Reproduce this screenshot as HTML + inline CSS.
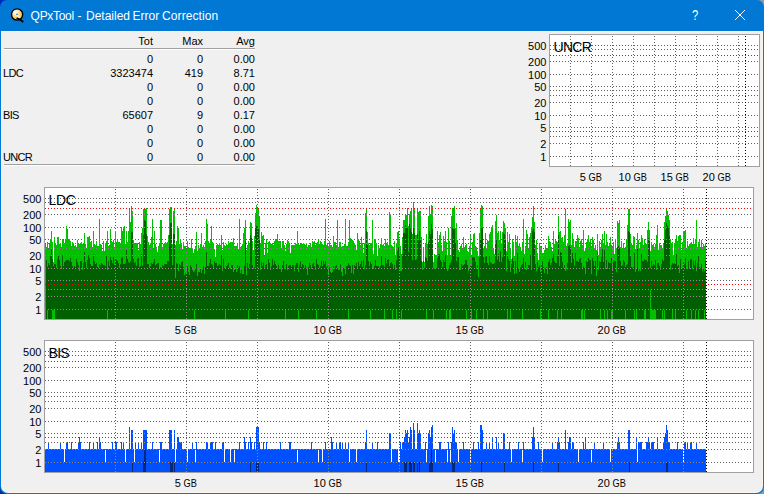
<!DOCTYPE html>
<html><head><meta charset="utf-8"><title>QPxTool - Detailed Error Correction</title>
<style>
html,body{margin:0;padding:0}
body{width:764px;height:494px;position:relative;overflow:hidden;background:#8b99a8;font-family:"Liberation Sans", sans-serif;}
.cn{position:absolute;width:10px;height:10px}
#win{position:absolute;left:0;top:0;width:764px;height:494px;background:#0078d4;border-radius:7px;overflow:hidden}
#edge{position:absolute;left:1px;top:31px;width:762px;height:462px;background:#fdf6ee;border-radius:0 0 7px 7px}
#body{position:absolute;left:2px;top:32px;width:760px;height:460px;background:#f0f0f0;border-radius:0 0 6px 6px}
#title{position:absolute;left:0;top:8px;font-size:12px;line-height:16px;color:#fff;white-space:nowrap}
#title span{position:absolute;top:0}
.tb{position:absolute;color:#fff}
.r{position:absolute;left:0;height:14px;width:260px;font-size:11px;line-height:14px;color:#000;white-space:nowrap}
.r span{position:absolute;top:0}
.c0{left:3px;letter-spacing:-0.7px}
.c1{right:107px}.c2{right:57px}.c3{right:5px}
.hl{position:absolute;left:4px;width:251px;height:1px}
</style></head><body>
<div class="cn" style="left:0;top:0;background:#0028be"></div>
<div class="cn" style="left:0;bottom:0;background:#002a96"></div>
<div id="win">
<svg width="30" height="30" viewBox="0 0 30 30" style="position:absolute;left:0;top:0">
<defs><radialGradient id="g" cx="0.36" cy="0.3" r="0.8"><stop offset="0" stop-color="#fff"/><stop offset="0.45" stop-color="#ffd98a"/><stop offset="1" stop-color="#ffb000"/></radialGradient></defs>
<circle cx="17.1" cy="14.5" r="5.6" fill="url(#g)" stroke="#000" stroke-width="1.4"/>
<path d="M13.5 11 L20 18" stroke="#fff" stroke-opacity=".55" stroke-width="2"/>
<circle cx="17" cy="14.4" r="0.8" fill="#2a7fd0"/>
<path d="M17.3 18.4 Q20 19 22.6 21.5" stroke="#000" stroke-width="1.9" fill="none" stroke-linecap="round"/>
</svg>
<div id="title"><span style="left:30.6px;letter-spacing:-0.3px">QPxTool</span> <span style="left:77.6px">-</span> <span style="left:86px">Detailed</span> <span style="left:132.6px">Error</span> <span style="left:162px;letter-spacing:0.1px">Correction</span></div>
<div class="tb" style="left:691px;top:6px;font-size:14px;line-height:18px;width:8px;text-align:center;transform:scaleX(.8);transform-origin:4.2px 0">?</div>
<svg width="12" height="12" viewBox="0 0 12 12" style="position:absolute;left:734px;top:9px"><path d="M1 1L11 11M11 1L1 11" stroke="#fff" stroke-width="1"/></svg>
<div id="edge"></div><div id="body"></div>
<div class="hl" style="top:48px;background:#a0a0a0"></div><div class="hl" style="top:49px;background:#fff"></div>
<div class="hl" style="top:164px;background:#a0a0a0"></div><div class="hl" style="top:165px;background:#fff"></div>
<div class="r" style="top:34px"><span class="c1">Tot</span> <span class="c2">Max</span> <span class="c3">Avg</span></div>
<div class="r" style="top:52px"><span class="c0"></span> <span class="c1">0</span><span class="c2">0</span> <span class="c3">0.00</span></div>
<div class="r" style="top:66px"><span class="c0">LDC</span> <span class="c1">3323474</span><span class="c2">419</span> <span class="c3">8.71</span></div>
<div class="r" style="top:80px"><span class="c0"></span> <span class="c1">0</span><span class="c2">0</span> <span class="c3">0.00</span></div>
<div class="r" style="top:94px"><span class="c0"></span> <span class="c1">0</span><span class="c2">0</span> <span class="c3">0.00</span></div>
<div class="r" style="top:108px"><span class="c0">BIS</span> <span class="c1">65607</span><span class="c2">9</span> <span class="c3">0.17</span></div>
<div class="r" style="top:122px"><span class="c0"></span> <span class="c1">0</span><span class="c2">0</span> <span class="c3">0.00</span></div>
<div class="r" style="top:136px"><span class="c0"></span> <span class="c1">0</span><span class="c2">0</span> <span class="c3">0.00</span></div>
<div class="r" style="top:150px"><span class="c0">UNCR</span> <span class="c1">0</span><span class="c2">0</span> <span class="c3">0.00</span></div>
<svg width="764" height="494" viewBox="0 0 764 494" style="position:absolute;left:0;top:0"><rect x="549" y="34" width="211" height="133" fill="#fff"/><rect x="44" y="187" width="710" height="133" fill="#fff"/><rect x="44" y="340" width="710" height="133" fill="#fff"/><g shape-rendering="crispEdges"><path id="pl" fill="#00c000" d="M45 244H46V319H45ZM46 247H47V319H46ZM47 242H48V319H47ZM48 249H49V319H48ZM49 243H50V319H49ZM50 239H51V319H50ZM51 231H52V319H51ZM52 242H53V319H52ZM53 262H54V319H53ZM54 237H55V319H54ZM55 243H56V319H55ZM56 245H57V319H56ZM57 237H59V319H57ZM59 244H60V319H59ZM60 243H61V319H60ZM61 247H62V319H61ZM62 239H63V319H62ZM63 240H64V319H63ZM64 243H65V319H64ZM65 239H66V319H65ZM66 226H67V319H66ZM67 229H68V319H67ZM68 239H70V319H68ZM70 241H71V319H70ZM71 246H72V319H71ZM72 242H73V319H72ZM73 243H74V319H73ZM74 246H75V319H74ZM75 245H76V319H75ZM76 247H77V319H76ZM77 240H78V319H77ZM78 244H80V319H78ZM80 243H81V319H80ZM81 242H82V319H81ZM82 244H83V319H82ZM83 243H84V319H83ZM84 233H85V319H84ZM85 244H86V319H85ZM86 248H87V319H86ZM87 237H89V319H87ZM89 236H90V319H89ZM90 242H91V319H90ZM91 241H92V319H91ZM92 247H93V319H92ZM93 231H94V319H93ZM94 244H95V319H94ZM95 245H96V319H95ZM96 241H97V319H96ZM97 246H99V319H97ZM99 219H100V319H99ZM100 244H101V319H100ZM101 245H102V319H101ZM102 251H103V319H102ZM103 241H104V319H103ZM104 251H105V319H104ZM105 243H106V319H105ZM106 241H107V319H106ZM107 231H108V319H107ZM108 246H109V319H108ZM109 245H110V319H109ZM110 229H111V319H110ZM111 241H112V319H111ZM112 242H113V319H112ZM113 240H114V319H113ZM114 247H115V319H114ZM115 231H116V319H115ZM116 242H117V319H116ZM117 240H118V319H117ZM118 242H120V319H118ZM120 243H121V319H120ZM121 227H122V319H121ZM122 231H123V319H122ZM123 227H124V319H123ZM124 226H125V319H124ZM125 244H126V319H125ZM126 231H127V319H126ZM127 242H128V319H127ZM128 231H129V319H128ZM129 208H130V319H129ZM130 222H131V319H130ZM131 206H132V319H131ZM132 211H133V319H132ZM133 240H134V319H133ZM134 243H135V319H134ZM135 244H136V319H135ZM136 243H138V319H136ZM138 250H139V319H138ZM139 242H140V319H139ZM140 244H141V319H140ZM141 233H142V319H141ZM142 228H143V319H142ZM143 209H146V319H143ZM146 208H147V319H146ZM147 236H148V319H147ZM148 242H149V319H148ZM149 245H150V319H149ZM150 243H151V319H150ZM151 237H152V319H151ZM152 219H153V319H152ZM153 249H154V319H153ZM154 231H155V319H154ZM155 244H156V319H155ZM156 247H157V319H156ZM157 252H158V319H157ZM158 246H159V319H158ZM159 243H160V319H159ZM160 220H162V319H160ZM162 247H163V319H162ZM163 244H164V319H163ZM164 243H165V319H164ZM165 242H166V319H165ZM166 243H167V319H166ZM167 242H168V319H167ZM168 235H169V319H168ZM169 209H170V319H169ZM170 207H172V319H170ZM172 244H173V319H172ZM173 211H174V319H173ZM174 208H175V319H174ZM175 245H176V319H175ZM176 241H177V319H176ZM177 226H178V319H177ZM178 228H179V319H178ZM179 244H180V319H179ZM180 239H181V319H180ZM181 243H182V319H181ZM182 249H183V319H182ZM183 242H184V319H183ZM184 246H186V319H184ZM186 250H187V319H186ZM187 241H188V319H187ZM188 247H189V319H188ZM189 249H190V319H189ZM190 248H191V319H190ZM191 239H192V319H191ZM192 248H193V319H192ZM193 253H194V319H193ZM194 249H195V319H194ZM195 246H196V319H195ZM196 232H197V319H196ZM197 251H198V319H197ZM198 245H199V319H198ZM199 248H200V319H199ZM200 244H201V319H200ZM201 233H202V319H201ZM202 247H203V319H202ZM203 245H204V319H203ZM204 247H205V319H204ZM205 241H206V319H205ZM206 219H207V319H206ZM207 224H208V319H207ZM208 241H209V319H208ZM209 243H210V319H209ZM210 240H211V319H210ZM211 226H212V319H211ZM212 242H213V319H212ZM213 243H214V319H213ZM214 249H215V319H214ZM215 257H216V319H215ZM216 245H217V319H216ZM217 244H218V319H217ZM218 245H219V319H218ZM219 243H220V319H219ZM220 245H221V319H220ZM221 235H222V319H221ZM222 250H223V319H222ZM223 242H224V319H223ZM224 245H225V319H224ZM225 246H226V319H225ZM226 244H227V319H226ZM227 245H228V319H227ZM228 241H229V319H228ZM229 243H230V319H229ZM230 242H233V319H230ZM233 238H234V319H233ZM234 246H237V319H234ZM237 244H238V319H237ZM238 249H239V319H238ZM239 219H240V319H239ZM240 247H241V319H240ZM241 246H242V319H241ZM242 244H243V319H242ZM243 233H244V319H243ZM244 228H245V319H244ZM245 220H246V319H245ZM246 250H247V319H246ZM247 245H248V319H247ZM248 241H249V319H248ZM249 244H250V319H249ZM250 222H251V319H250ZM251 223H252V319H251ZM252 241H253V319H252ZM253 250H254V319H253ZM254 236H255V319H254ZM255 213H256V319H255ZM256 205H257V319H256ZM257 208H258V319H257ZM258 209H259V319H258ZM259 216H260V319H259ZM260 243H261V319H260ZM261 232H262V319H261ZM262 236H263V319H262ZM263 235H264V319H263ZM264 256H265V319H264ZM265 243H266V319H265ZM266 239H267V319H266ZM267 253H268V319H267ZM268 242H269V319H268ZM269 241H270V319H269ZM270 243H271V319H270ZM271 244H272V319H271ZM272 243H273V319H272ZM273 245H274V319H273ZM274 241H275V319H274ZM275 239H276V319H275ZM276 240H277V319H276ZM277 234H278V319H277ZM278 241H281V319H278ZM281 248H282V319H281ZM282 241H284V319H282ZM284 245H285V319H284ZM285 251H286V319H285ZM286 244H287V319H286ZM287 240H288V319H287ZM288 241H289V319H288ZM289 243H290V319H289ZM290 253H291V319H290ZM291 245H295V319H291ZM295 243H296V319H295ZM296 244H297V319H296ZM297 231H298V319H297ZM298 243H299V319H298ZM299 245H300V319H299ZM300 244H301V319H300ZM301 243H302V319H301ZM302 244H303V319H302ZM303 243H304V319H303ZM304 244H305V319H304ZM305 245H306V319H305ZM306 243H307V319H306ZM307 247H308V319H307ZM308 245H310V319H308ZM310 243H311V319H310ZM311 247H312V319H311ZM312 241H313V319H312ZM313 242H314V319H313ZM314 241H315V319H314ZM315 245H316V319H315ZM316 243H317V319H316ZM317 242H318V319H317ZM318 240H319V319H318ZM319 244H320V319H319ZM320 241H321V319H320ZM321 242H322V319H321ZM322 244H323V319H322ZM323 245H324V319H323ZM324 241H325V319H324ZM325 219H326V319H325ZM326 245H327V319H326ZM327 244H328V319H327ZM328 246H329V319H328ZM329 241H330V319H329ZM330 245H332V319H330ZM332 247H333V319H332ZM333 236H334V319H333ZM334 242H336V319H334ZM336 245H337V319H336ZM337 220H338V319H337ZM338 247H339V319H338ZM339 242H341V319H339ZM341 247H342V319H341ZM342 246H344V319H342ZM344 244H345V319H344ZM345 219H346V319H345ZM346 246H348V319H346ZM348 242H349V319H348ZM349 220H350V319H349ZM350 238H351V319H350ZM351 240H353V319H351ZM353 241H354V319H353ZM354 243H355V319H354ZM355 245H356V319H355ZM356 250H357V319H356ZM357 233H358V319H357ZM358 239H359V319H358ZM359 241H360V319H359ZM360 245H361V319H360ZM361 237H362V319H361ZM362 243H363V319H362ZM363 253H364V319H363ZM364 243H365V319H364ZM365 213H366V319H365ZM366 209H367V319H366ZM367 232H368V319H367ZM368 243H369V319H368ZM369 245H370V319H369ZM370 243H372V319H370ZM372 220H373V319H372ZM373 254H374V319H373ZM374 239H376V319H374ZM376 243H377V319H376ZM377 256H378V319H377ZM378 245H379V319H378ZM379 248H380V319H379ZM380 244H381V319H380ZM381 238H382V319H381ZM382 245H383V319H382ZM383 244H384V319H383ZM384 246H385V319H384ZM385 239H386V319H385ZM386 243H387V319H386ZM387 242H388V319H387ZM388 245H389V319H388ZM389 212H390V319H389ZM390 214H391V319H390ZM391 245H392V319H391ZM392 246H393V319H392ZM393 247H394V319H393ZM394 241H395V319H394ZM395 255H396V319H395ZM396 243H397V319H396ZM397 232H398V319H397ZM398 231H399V319H398ZM399 240H400V319H399ZM400 246H401V319H400ZM401 254H402V319H401ZM402 237H403V319H402ZM403 220H405V319H403ZM405 215H407V319H405ZM407 208H408V319H407ZM408 226H409V319H408ZM409 214H410V319H409ZM410 211H411V319H410ZM411 208H412V319H411ZM412 234H413V319H412ZM413 202H414V319H413ZM414 208H415V319H414ZM415 235H417V319H415ZM417 208H418V319H417ZM418 212H419V319H418ZM419 211H421V319H419ZM421 237H422V319H421ZM422 262H423V319H422ZM423 247H424V319H423ZM424 262H425V319H424ZM425 243H426V319H425ZM426 234H427V319H426ZM427 244H428V319H427ZM428 216H429V319H428ZM429 206H430V319H429ZM430 214H431V319H430ZM431 205H432V319H431ZM432 206H433V319H432ZM433 262H434V319H433ZM434 254H435V319H434ZM435 255H437V319H435ZM437 231H438V319H437ZM438 242H439V319H438ZM439 235H440V319H439ZM440 232H441V319H440ZM441 245H442V319H441ZM442 251H443V319H442ZM443 236H444V319H443ZM444 241H445V319H444ZM445 231H446V319H445ZM446 242H447V319H446ZM447 255H448V319H447ZM448 228H449V319H448ZM449 241H450V319H449ZM450 256H451V319H450ZM451 216H452V319H451ZM452 208H453V319H452ZM453 209H454V319H453ZM454 206H455V319H454ZM455 228H456V319H455ZM456 223H457V319H456ZM457 240H458V319H457ZM458 250H459V319H458ZM459 252H460V319H459ZM460 246H461V319H460ZM461 244H462V319H461ZM462 249H463V319H462ZM463 237H464V319H463ZM464 247H465V319H464ZM465 245H466V319H465ZM466 244H467V319H466ZM467 251H468V319H467ZM468 252H469V319H468ZM469 246H470V319H469ZM470 235H471V319H470ZM471 256H472V319H471ZM472 242H473V319H472ZM473 234H474V319H473ZM474 233H475V319H474ZM475 246H476V319H475ZM476 247H477V319H476ZM477 251H478V319H477ZM478 256H479V319H478ZM479 233H480V319H479ZM480 208H481V319H480ZM481 205H482V319H481ZM482 206H483V319H482ZM483 248H484V319H483ZM484 246H485V319H484ZM485 233H486V319H485ZM486 248H487V319H486ZM487 240H488V319H487ZM488 241H489V319H488ZM489 234H490V319H489ZM490 232H491V319H490ZM491 227H492V319H491ZM492 225H493V319H492ZM493 248H494V319H493ZM494 254H495V319H494ZM495 221H496V319H495ZM496 215H497V319H496ZM497 233H498V319H497ZM498 231H499V319H498ZM499 240H500V319H499ZM500 231H501V319H500ZM501 243H502V319H501ZM502 232H503V319H502ZM503 221H504V319H503ZM504 223H505V319H504ZM505 228H506V319H505ZM506 251H507V319H506ZM507 232H508V319H507ZM508 242H509V319H508ZM509 234H510V319H509ZM510 249H511V319H510ZM511 259H512V319H511ZM512 239H513V319H512ZM513 242H514V319H513ZM514 256H515V319H514ZM515 235H516V319H515ZM516 242H517V319H516ZM517 236H518V319H517ZM518 246H519V319H518ZM519 243H520V319H519ZM520 247H521V319H520ZM521 251H522V319H521ZM522 242H523V319H522ZM523 219H524V319H523ZM524 254H525V319H524ZM525 246H526V319H525ZM526 230H527V319H526ZM527 234H528V319H527ZM528 249H529V319H528ZM529 237H530V319H529ZM530 233H531V319H530ZM531 227H532V319H531ZM532 217H533V319H532ZM533 206H534V319H533ZM534 222H535V319H534ZM535 245H536V319H535ZM536 240H537V319H536ZM537 253H538V319H537ZM538 260H539V319H538ZM539 243H540V319H539ZM540 246H541V319H540ZM541 247H542V319H541ZM542 253H544V319H542ZM544 250H545V319H544ZM545 245H546V319H545ZM546 249H547V319H546ZM547 248H548V319H547ZM548 236H549V319H548ZM549 241H550V319H549ZM550 242H551V319H550ZM551 247H552V319H551ZM552 251H553V319H552ZM553 231H554V319H553ZM554 244H555V319H554ZM555 240H556V319H555ZM556 241H557V319H556ZM557 242H558V319H557ZM558 216H559V319H558ZM559 232H560V319H559ZM560 231H561V319H560ZM561 238H562V319H561ZM562 237H563V319H562ZM563 242H564V319H563ZM564 235H565V319H564ZM565 209H566V319H565ZM566 246H567V319H566ZM567 243H568V319H567ZM568 219H569V319H568ZM569 222H570V319H569ZM570 220H571V319H570ZM571 245H572V319H571ZM572 233H573V319H572ZM573 240H574V319H573ZM574 247H575V319H574ZM575 241H577V319H575ZM577 235H578V319H577ZM578 238H579V319H578ZM579 247H580V319H579ZM580 241H581V319H580ZM581 239H582V319H581ZM582 245H583V319H582ZM583 230H584V319H583ZM584 251H585V319H584ZM585 248H586V319H585ZM586 242H587V319H586ZM587 239H588V319H587ZM588 235H589V319H588ZM589 242H590V319H589ZM590 239H591V319H590ZM591 246H592V319H591ZM592 237H593V319H592ZM593 240H594V319H593ZM594 248H595V319H594ZM595 245H596V319H595ZM596 250H597V319H596ZM597 234H598V319H597ZM598 255H599V319H598ZM599 241H600V319H599ZM600 247H601V319H600ZM601 240H602V319H601ZM602 234H603V319H602ZM603 243H604V319H603ZM604 231H605V319H604ZM605 245H606V319H605ZM606 234H607V319H606ZM607 242H608V319H607ZM608 246H609V319H608ZM609 244H610V319H609ZM610 237H611V319H610ZM611 245H612V319H611ZM612 247H613V319H612ZM613 242H614V319H613ZM614 254H615V319H614ZM615 239H616V319H615ZM616 248H617V319H616ZM617 221H618V319H617ZM618 223H619V319H618ZM619 220H620V319H619ZM620 247H621V319H620ZM621 241H622V319H621ZM622 248H623V319H622ZM623 243H624V319H623ZM624 249H625V319H624ZM625 247H626V319H625ZM626 239H627V319H626ZM627 225H628V319H627ZM628 209H630V319H628ZM630 234H631V319H630ZM631 243H632V319H631ZM632 245H633V319H632ZM633 236H634V319H633ZM634 237H635V319H634ZM635 249H636V319H635ZM636 245H637V319H636ZM637 233H638V319H637ZM638 240H639V319H638ZM639 248H640V319H639ZM640 242H641V319H640ZM641 235H642V319H641ZM642 238H643V319H642ZM643 245H644V319H643ZM644 239H645V319H644ZM645 244H647V319H645ZM647 230H648V319H647ZM648 222H649V319H648ZM649 230H650V319H649ZM650 251H651V319H650ZM651 242H652V319H651ZM652 245H653V319H652ZM653 244H654V319H653ZM654 247H655V319H654ZM655 244H656V319H655ZM656 235H657V319H656ZM657 225H658V319H657ZM658 250H659V319H658ZM659 243H660V319H659ZM660 245H662V319H660ZM662 248H663V319H662ZM663 244H664V319H663ZM664 222H665V319H664ZM665 216H666V319H665ZM666 209H667V319H666ZM667 211H668V319H667ZM668 215H669V319H668ZM669 220H670V319H669ZM670 239H671V319H670ZM671 243H672V319H671ZM672 242H673V319H672ZM673 255H674V319H673ZM674 243H675V319H674ZM675 240H676V319H675ZM676 235H677V319H676ZM677 241H678V319H677ZM678 236H679V319H678ZM679 235H681V319H679ZM681 250H682V319H681ZM682 242H683V319H682ZM683 231H685V319H683ZM685 230H686V319H685ZM686 248H687V319H686ZM687 241H688V319H687ZM688 246H689V319H688ZM689 244H690V319H689ZM690 243H691V319H690ZM691 242H692V319H691ZM692 244H693V319H692ZM693 238H694V319H693ZM694 244H695V319H694ZM695 239H696V319H695ZM696 220H697V319H696ZM697 247H698V319H697ZM698 242H699V319H698ZM699 240H700V319H699ZM700 247H701V319H700ZM701 240H702V319H701ZM702 247H703V319H702ZM703 244H704V319H703ZM704 246H705V319H704ZM705 243H706V319H705Z"/><path id="pd" fill="#006000" d="M46 260H47V319H46ZM47 267H48V319H47ZM48 263H49V319H48ZM49 265H50V319H49ZM50 256H51V319H50ZM51 248H52V319H51ZM52 259H53V319H52ZM53 266H54V319H53ZM54 264H56V319H54ZM56 268H57V319H56ZM57 259H58V319H57ZM58 256H59V319H58ZM59 260H60V319H59ZM60 266H61V319H60ZM61 269H62V319H61ZM62 255H63V319H62ZM63 266H64V319H63ZM64 262H65V319H64ZM65 261H66V319H65ZM66 260H69V319H66ZM69 261H70V319H69ZM70 258H71V319H70ZM71 262H72V319H71ZM72 266H73V319H72ZM73 268H74V319H73ZM74 266H75V319H74ZM75 267H76V319H75ZM76 259H77V319H76ZM77 262H78V319H77ZM78 265H79V319H78ZM79 271H80V319H79ZM80 261H82V319H80ZM82 270H83V319H82ZM83 263H84V319H83ZM84 252H85V319H84ZM85 262H86V319H85ZM86 268H87V319H86ZM87 260H88V319H87ZM88 255H89V319H88ZM89 258H90V319H89ZM90 264H91V319H90ZM91 266H93V319H91ZM93 254H94V319H93ZM94 261H95V319H94ZM95 264H96V319H95ZM96 263H97V319H96ZM97 267H98V319H97ZM98 268H99V319H98ZM99 264H100V319H99ZM100 265H101V319H100ZM101 263H102V319H101ZM102 264H103V319H102ZM103 265H105V319H103ZM105 266H106V319H105ZM106 256H107V319H106ZM107 270H108V319H107ZM108 261H109V319H108ZM109 266H110V319H109ZM110 257H111V319H110ZM111 260H112V319H111ZM112 263H113V319H112ZM113 257H114V319H113ZM114 265H115V319H114ZM115 259H116V319H115ZM116 260H117V319H116ZM117 261H118V319H117ZM118 263H119V319H118ZM119 268H120V319H119ZM120 264H121V319H120ZM121 258H122V319H121ZM122 257H123V319H122ZM123 264H125V319H123ZM125 263H126V319H125ZM126 250H127V319H126ZM127 259H128V319H127ZM128 262H129V319H128ZM129 263H130V319H129ZM130 261H131V319H130ZM131 232H133V319H131ZM133 259H134V319H133ZM134 263H135V319H134ZM135 262H136V319H135ZM136 266H137V319H136ZM137 259H138V319H137ZM138 258H139V319H138ZM139 267H140V319H139ZM140 266H141V319H140ZM141 254H142V319H141ZM142 266H143V319H142ZM143 235H144V319H143ZM144 220H145V319H144ZM145 221H146V319H145ZM146 234H147V319H146ZM147 264H149V319H147ZM149 268H150V319H149ZM150 266H151V319H150ZM151 263H152V319H151ZM152 264H153V319H152ZM153 262H154V319H153ZM154 259H155V319H154ZM155 265H156V319H155ZM156 264H157V319H156ZM157 263H159V319H157ZM159 268H160V319H159ZM160 267H161V319H160ZM161 268H162V319H161ZM162 265H163V319H162ZM163 266H164V319H163ZM164 264H167V319H164ZM167 261H169V319H167ZM169 235H170V319H169ZM170 223H172V319H170ZM172 265H173V319H172ZM173 234H175V319H173ZM175 278H176V319H175ZM176 263H177V319H176ZM177 264H178V319H177ZM178 271H179V319H178ZM179 264H180V319H179ZM180 265H181V319H180ZM181 262H182V319H181ZM182 261H183V319H182ZM183 267H184V319H183ZM184 275H185V319H184ZM185 273H187V319H185ZM187 266H188V319H187ZM188 272H189V319H188ZM189 275H190V319H189ZM190 265H191V319H190ZM191 267H192V319H191ZM192 270H193V319H192ZM193 272H194V319H193ZM194 271H195V319H194ZM195 269H196V319H195ZM196 264H197V319H196ZM197 276H198V319H197ZM198 272H200V319H198ZM200 269H201V319H200ZM201 273H202V319H201ZM202 270H203V319H202ZM203 266H204V319H203ZM204 274H205V319H204ZM205 267H206V319H205ZM206 252H207V319H206ZM207 266H209V319H207ZM209 263H210V319H209ZM210 259H211V319H210ZM211 264H212V319H211ZM212 265H213V319H212ZM213 268H214V319H213ZM214 261H215V319H214ZM215 263H217V319H215ZM217 266H218V319H217ZM218 265H219V319H218ZM219 264H220V319H219ZM220 265H221V319H220ZM221 255H222V319H221ZM222 271H223V319H222ZM223 259H224V319H223ZM224 268H226V319H224ZM226 266H227V319H226ZM227 265H228V319H227ZM228 263H229V319H228ZM229 268H230V319H229ZM230 269H231V319H230ZM231 265H233V319H231ZM233 272H234V319H233ZM234 270H235V319H234ZM235 269H236V319H235ZM236 272H237V319H236ZM237 265H238V319H237ZM238 268H239V319H238ZM239 266H240V319H239ZM240 273H241V319H240ZM241 270H242V319H241ZM242 274H244V319H242ZM244 266H245V319H244ZM245 241H246V319H245ZM246 275H247V319H246ZM247 263H248V319H247ZM248 268H249V319H248ZM249 264H250V319H249ZM250 235H251V319H250ZM251 238H252V319H251ZM252 265H253V319H252ZM253 269H254V319H253ZM254 267H255V319H254ZM255 227H256V319H255ZM256 226H258V319H256ZM258 229H259V319H258ZM259 240H260V319H259ZM260 270H261V319H260ZM261 262H262V319H261ZM262 266H263V319H262ZM263 263H264V319H263ZM264 268H265V319H264ZM265 265H266V319H265ZM266 264H267V319H266ZM267 268H268V319H267ZM268 259H269V319H268ZM269 263H270V319H269ZM270 270H271V319H270ZM271 266H272V319H271ZM272 259H273V319H272ZM273 265H274V319H273ZM274 261H275V319H274ZM275 264H276V319H275ZM276 266H277V319H276ZM277 269H278V319H277ZM278 265H279V319H278ZM279 269H281V319H279ZM281 272H282V319H281ZM282 265H283V319H282ZM283 261H284V319H283ZM284 269H286V319H284ZM286 264H287V319H286ZM287 270H288V319H287ZM288 266H289V319H288ZM289 265H291V319H289ZM291 267H292V319H291ZM292 265H294V319H292ZM294 271H295V319H294ZM295 265H296V319H295ZM296 263H298V319H296ZM298 272H299V319H298ZM299 265H300V319H299ZM300 261H301V319H300ZM301 267H302V319H301ZM302 264H303V319H302ZM303 265H304V319H303ZM304 268H305V319H304ZM305 265H306V319H305ZM306 269H307V319H306ZM307 275H308V319H307ZM308 267H309V319H308ZM309 263H310V319H309ZM310 265H311V319H310ZM311 269H312V319H311ZM312 264H313V319H312ZM313 263H314V319H313ZM314 266H315V319H314ZM315 270H316V319H315ZM316 259H317V319H316ZM317 264H318V319H317ZM318 265H319V319H318ZM319 268H320V319H319ZM320 266H321V319H320ZM321 260H322V319H321ZM322 266H323V319H322ZM323 261H324V319H323ZM324 264H325V319H324ZM325 261H326V319H325ZM326 267H327V319H326ZM327 266H328V319H327ZM328 275H329V319H328ZM329 267H330V319H329ZM330 272H331V319H330ZM331 273H332V319H331ZM332 272H333V319H332ZM333 266H334V319H333ZM334 269H335V319H334ZM335 266H336V319H335ZM336 265H337V319H336ZM337 268H338V319H337ZM338 270H340V319H338ZM340 264H341V319H340ZM341 272H342V319H341ZM342 276H343V319H342ZM343 268H344V319H343ZM344 269H345V319H344ZM345 274H346V319H345ZM346 266H348V319H346ZM348 263H349V319H348ZM349 265H350V319H349ZM350 266H351V319H350ZM351 273H352V319H351ZM352 265H353V319H352ZM353 274H354V319H353ZM354 265H355V319H354ZM355 266H356V319H355ZM356 263H357V319H356ZM357 269H358V319H357ZM358 262H359V319H358ZM359 266H360V319H359ZM360 264H361V319H360ZM361 261H362V319H361ZM362 267H363V319H362ZM363 260H364V319H363ZM364 269H365V319H364ZM365 265H366V319H365ZM366 231H367V319H366ZM367 245H368V319H367ZM368 261H369V319H368ZM369 266H370V319H369ZM370 262H371V319H370ZM371 264H372V319H371ZM372 268H373V319H372ZM373 269H374V319H373ZM374 266H375V319H374ZM375 260H376V319H375ZM376 266H379V319H376ZM379 268H380V319H379ZM380 266H381V319H380ZM381 255H382V319H381ZM382 265H384V319H382ZM384 267H385V319H384ZM385 258H386V319H385ZM386 263H387V319H386ZM387 260H388V319H387ZM388 259H389V319H388ZM389 266H390V319H389ZM390 263H391V319H390ZM391 262H392V319H391ZM392 264H393V319H392ZM393 269H394V319H393ZM394 265H395V319H394ZM395 270H396V319H395ZM396 260H397V319H396ZM397 251H398V319H397ZM398 247H399V319H398ZM399 256H400V319H399ZM400 271H402V319H400ZM402 254H403V319H402ZM403 233H405V319H403ZM405 225H406V319H405ZM406 228H408V319H406ZM408 252H409V319H408ZM409 224H410V319H409ZM410 228H411V319H410ZM411 232H412V319H411ZM412 260H413V319H412ZM413 228H414V319H413ZM414 233H415V319H414ZM415 260H416V319H415ZM416 259H417V319H416ZM417 234H418V319H417ZM418 240H419V319H418ZM419 231H420V319H419ZM420 239H421V319H420ZM421 261H422V319H421ZM422 270H423V319H422ZM423 261H424V319H423ZM424 268H425V319H424ZM425 257H426V319H425ZM426 258H427V319H426ZM427 261H428V319H427ZM428 242H429V319H428ZM429 231H430V319H429ZM430 234H431V319H430ZM431 224H432V319H431ZM432 229H433V319H432ZM433 268H434V319H433ZM434 269H435V319H434ZM435 268H437V319H435ZM437 258H438V319H437ZM438 254H440V319H438ZM440 260H441V319H440ZM441 262H442V319H441ZM442 267H443V319H442ZM443 260H444V319H443ZM444 262H445V319H444ZM445 255H446V319H445ZM446 269H447V319H446ZM447 271H448V319H447ZM448 269H449V319H448ZM449 265H450V319H449ZM450 263H451V319H450ZM451 260H452V319H451ZM452 228H453V319H452ZM453 229H455V319H453ZM455 243H456V319H455ZM456 261H457V319H456ZM457 257H459V319H457ZM459 270H461V319H459ZM461 264H462V319H461ZM462 266H463V319H462ZM463 265H464V319H463ZM464 264H465V319H464ZM465 260H467V319H465ZM467 265H468V319H467ZM468 271H469V319H468ZM469 269H470V319H469ZM470 266H472V319H470ZM472 257H474V319H472ZM474 258H475V319H474ZM475 262H476V319H475ZM476 269H477V319H476ZM477 265H478V319H477ZM478 277H479V319H478ZM479 257H480V319H479ZM480 240H481V319H480ZM481 228H483V319H481ZM483 257H484V319H483ZM484 263H485V319H484ZM485 257H486V319H485ZM486 255H487V319H486ZM487 263H488V319H487ZM488 265H489V319H488ZM489 256H490V319H489ZM490 262H491V319H490ZM491 263H492V319H491ZM492 264H494V319H492ZM494 263H495V319H494ZM495 243H496V319H495ZM496 240H497V319H496ZM497 260H498V319H497ZM498 254H499V319H498ZM499 262H500V319H499ZM500 251H501V319H500ZM501 262H502V319H501ZM502 257H503V319H502ZM503 233H504V319H503ZM504 234H505V319H504ZM505 240H506V319H505ZM506 271H507V319H506ZM507 253H508V319H507ZM508 259H509V319H508ZM509 261H510V319H509ZM510 272H511V319H510ZM511 264H512V319H511ZM512 258H513V319H512ZM513 261H514V319H513ZM514 274H515V319H514ZM515 261H516V319H515ZM516 273H517V319H516ZM517 253H518V319H517ZM518 269H519V319H518ZM519 272H520V319H519ZM520 267H521V319H520ZM521 265H522V319H521ZM522 264H523V319H522ZM523 258H524V319H523ZM524 269H525V319H524ZM525 262H526V319H525ZM526 270H527V319H526ZM527 269H528V319H527ZM528 265H530V319H528ZM530 255H531V319H530ZM531 270H532V319H531ZM532 231H533V319H532ZM533 229H534V319H533ZM534 232H535V319H534ZM535 264H536V319H535ZM536 271H537V319H536ZM537 262H538V319H537ZM538 267H539V319H538ZM539 265H540V319H539ZM540 272H541V319H540ZM541 265H542V319H541ZM542 261H543V319H542ZM543 267H544V319H543ZM544 273H545V319H544ZM545 268H546V319H545ZM546 267H547V319H546ZM547 274H548V319H547ZM548 262H549V319H548ZM549 259H550V319H549ZM550 265H551V319H550ZM551 263H552V319H551ZM552 258H553V319H552ZM553 254H554V319H553ZM554 261H555V319H554ZM555 263H557V319H555ZM557 256H558V319H557ZM558 235H559V319H558ZM559 266H560V319H559ZM560 252H561V319H560ZM561 253H562V319H561ZM562 262H563V319H562ZM563 268H564V319H563ZM564 265H565V319H564ZM565 271H566V319H565ZM566 269H567V319H566ZM567 263H568V319H567ZM568 246H569V319H568ZM569 245H570V319H569ZM570 247H571V319H570ZM571 263H572V319H571ZM572 253H573V319H572ZM573 259H574V319H573ZM574 266H575V319H574ZM575 253H576V319H575ZM576 261H578V319H576ZM578 262H579V319H578ZM579 259H580V319H579ZM580 258H581V319H580ZM581 263H582V319H581ZM582 268H583V319H582ZM583 266H584V319H583ZM584 268H585V319H584ZM585 274H586V319H585ZM586 261H587V319H586ZM587 262H588V319H587ZM588 258H589V319H588ZM589 260H591V319H589ZM591 274H592V319H591ZM592 258H593V319H592ZM593 261H594V319H593ZM594 266H595V319H594ZM595 261H596V319H595ZM596 276H597V319H596ZM597 252H598V319H597ZM598 270H599V319H598ZM599 261H600V319H599ZM600 262H601V319H600ZM601 257H602V319H601ZM602 249H603V319H602ZM603 262H604V319H603ZM604 250H605V319H604ZM605 269H606V319H605ZM606 260H607V319H606ZM607 269H608V319H607ZM608 262H609V319H608ZM609 263H611V319H609ZM611 258H612V319H611ZM612 271H613V319H612ZM613 261H616V319H613ZM616 272H617V319H616ZM617 247H618V319H617ZM618 246H619V319H618ZM619 248H620V319H619ZM620 261H621V319H620ZM621 266H622V319H621ZM622 265H623V319H622ZM623 260H624V319H623ZM624 262H625V319H624ZM625 267H626V319H625ZM626 265H627V319H626ZM627 264H628V319H627ZM628 231H629V319H628ZM629 232H630V319H629ZM630 255H631V319H630ZM631 267H632V319H631ZM632 268H633V319H632ZM633 267H634V319H633ZM634 253H635V319H634ZM635 272H636V319H635ZM636 268H637V319H636ZM637 249H638V319H637ZM638 271H639V319H638ZM639 269H640V319H639ZM640 271H641V319H640ZM641 254H642V319H641ZM642 261H644V319H642ZM644 259H645V319H644ZM645 260H647V319H645ZM647 262H648V319H647ZM648 238H649V319H648ZM649 241H650V319H649ZM650 268H651V319H650ZM651 261H652V319H651ZM652 266H653V319H652ZM653 264H654V319H653ZM654 265H655V319H654ZM655 260H656V319H655ZM656 270H657V319H656ZM657 263H659V319H657ZM659 266H660V319H659ZM660 270H661V319H660ZM661 264H662V319H661ZM662 259H663V319H662ZM663 261H664V319H663ZM664 240H665V319H664ZM665 230H666V319H665ZM666 223H667V319H666ZM667 226H668V319H667ZM668 228H669V319H668ZM669 236H670V319H669ZM670 270H671V319H670ZM671 265H672V319H671ZM672 263H673V319H672ZM673 264H674V319H673ZM674 263H675V319H674ZM675 264H676V319H675ZM676 254H677V319H676ZM677 266H678V319H677ZM678 265H679V319H678ZM679 273H680V319H679ZM680 259H681V319H680ZM681 268H683V319H681ZM683 261H684V319H683ZM684 264H685V319H684ZM685 258H686V319H685ZM686 269H688V319H686ZM688 261H689V319H688ZM689 269H690V319H689ZM690 259H692V319H690ZM692 269H693V319H692ZM693 261H694V319H693ZM694 265H695V319H694ZM695 260H696V319H695ZM696 271H697V319H696ZM697 263H698V319H697ZM698 256H699V319H698ZM699 267H700V319H699ZM700 268H701V319H700ZM701 264H702V319H701ZM702 271H703V319H702ZM703 269H704V319H703ZM704 271H705V319H704ZM705 261H706V319H705Z"/><path id="pf" fill="#00c000" d="M47 310H48V319H47ZM52 310H55V319H52ZM107 310H108V319H107ZM194 310H195V319H194ZM225 310H226V319H225ZM248 310H249V319H248ZM285 310H286V319H285ZM298 310H299V319H298ZM316 310H317V319H316ZM348 310H349V319H348ZM370 310H371V319H370ZM384 310H385V319H384ZM392 310H393V319H392ZM396 310H397V319H396ZM401 310H402V319H401ZM426 310H427V319H426ZM433 310H434V319H433ZM446 310H447V319H446ZM449 310H451V319H449ZM466 310H467V319H466ZM471 310H472V319H471ZM476 310H477V319H476ZM483 310H484V319H483ZM487 310H488V319H487ZM507 310H508V319H507ZM510 310H511V319H510ZM522 310H523V319H522ZM540 310H541V319H540ZM548 310H549V319H548ZM557 310H558V319H557ZM561 310H562V319H561ZM581 310H583V319H581ZM584 310H585V319H584ZM600 310H601V319H600ZM604 310H605V319H604ZM607 310H608V319H607ZM611 310H613V319H611ZM625 310H626V319H625ZM634 310H635V319H634ZM636 310H637V319H636ZM644 310H646V319H644ZM650 290H651V319H650ZM651 310H656V319H651ZM662 310H663V319H662ZM664 310H665V319H664ZM672 310H673V319H672ZM675 310H676V319H675ZM686 310H687V319H686ZM691 310H692V319H691ZM695 310H696V319H695ZM698 310H699V319H698ZM704 310H705V319H704Z"/><path id="pb" fill="#0050ff" d="M45 449H48V472H45ZM48 442H49V472H48ZM49 449H60V472H49ZM60 442H61V472H60ZM61 449H64V472H61ZM64 462H65V472H64ZM65 449H66V472H65ZM66 442H68V472H66ZM68 449H71V472H68ZM71 442H72V472H71ZM72 449H78V472H72ZM78 442H79V472H78ZM79 437H80V472H79ZM80 442H81V472H80ZM81 449H89V472H81ZM89 442H90V472H89ZM90 449H93V472H90ZM93 442H94V472H93ZM94 449H97V472H94ZM97 442H98V472H97ZM98 449H99V472H98ZM99 437H100V472H99ZM100 442H101V472H100ZM101 449H105V472H101ZM105 462H106V472H105ZM106 449H112V472H106ZM112 442H113V472H112ZM113 449H115V472H113ZM115 442H117V472H115ZM117 449H121V472H117ZM121 442H122V472H121ZM122 449H123V472H122ZM123 442H124V472H123ZM124 449H125V472H124ZM125 462H126V472H125ZM126 449H129V472H126ZM129 427H130V472H129ZM130 449H131V472H130ZM131 430H133V472H131ZM133 449H134V472H133ZM134 462H135V472H134ZM135 442H136V472H135ZM136 449H138V472H136ZM138 442H139V472H138ZM139 449H141V472H139ZM141 442H142V472H141ZM142 449H143V472H142ZM143 430H147V472H143ZM147 449H152V472H147ZM152 442H153V472H152ZM153 449H159V472H153ZM159 462H160V472H159ZM160 442H162V472H160ZM162 449H169V472H162ZM169 430H172V472H169ZM172 449H174V472H172ZM174 430H175V472H174ZM175 462H176V472H175ZM176 449H177V472H176ZM177 437H179V472H177ZM179 442H182V472H179ZM182 449H187V472H182ZM187 462H188V472H187ZM188 449H192V472H188ZM192 442H193V472H192ZM193 449H195V472H193ZM195 462H196V472H195ZM196 442H197V472H196ZM197 449H206V472H197ZM206 442H208V472H206ZM208 449H210V472H208ZM210 442H213V472H210ZM213 449H215V472H213ZM215 442H216V472H215ZM216 449H222V472H216ZM222 442H224V472H222ZM224 462H225V472H224ZM225 449H230V472H225ZM230 462H231V472H230ZM231 449H234V472H231ZM234 462H235V472H234ZM235 449H239V472H235ZM239 442H240V472H239ZM240 449H244V472H240ZM244 437H245V472H244ZM245 442H246V472H245ZM246 449H248V472H246ZM248 442H249V472H248ZM249 449H250V472H249ZM250 437H251V472H250ZM251 442H252V472H251ZM252 449H254V472H252ZM254 442H255V472H254ZM255 449H256V472H255ZM256 427H259V472H256ZM259 442H260V472H259ZM260 449H263V472H260ZM263 442H264V472H263ZM264 449H266V472H264ZM266 442H267V472H266ZM267 449H280V472H267ZM280 442H281V472H280ZM281 449H289V472H281ZM289 442H291V472H289ZM291 449H297V472H291ZM297 462H298V472H297ZM298 449H311V472H298ZM311 442H312V472H311ZM312 449H318V472H312ZM318 462H319V472H318ZM319 449H322V472H319ZM322 462H323V472H322ZM323 449H325V472H323ZM325 442H326V472H325ZM326 449H331V472H326ZM331 437H332V472H331ZM332 442H333V472H332ZM333 449H336V472H333ZM336 442H337V472H336ZM337 449H339V472H337ZM339 442H341V472H339ZM341 449H342V472H341ZM342 442H343V472H342ZM343 449H345V472H343ZM345 442H346V472H345ZM346 449H348V472H346ZM348 442H349V472H348ZM349 462H350V472H349ZM350 449H356V472H350ZM356 462H357V472H356ZM357 449H365V472H357ZM365 442H366V472H365ZM366 430H367V472H366ZM367 449H372V472H367ZM372 442H373V472H372ZM373 449H377V472H373ZM377 442H378V472H377ZM378 449H389V472H378ZM389 433H391V472H389ZM391 462H392V472H391ZM392 449H398V472H392ZM398 462H400V472H398ZM400 442H401V472H400ZM401 449H402V472H401ZM402 442H404V472H402ZM404 437H405V472H404ZM405 430H406V472H405ZM406 433H407V472H406ZM407 430H408V472H407ZM408 442H409V472H408ZM409 437H410V472H409ZM410 427H411V472H410ZM411 430H412V472H411ZM412 449H413V472H412ZM413 423H414V472H413ZM414 430H415V472H414ZM415 449H417V472H415ZM417 423H418V472H417ZM418 433H419V472H418ZM419 430H420V472H419ZM420 433H421V472H420ZM421 449H425V472H421ZM425 442H426V472H425ZM426 462H427V472H426ZM427 449H428V472H427ZM428 433H429V472H428ZM429 430H430V472H429ZM430 437H431V472H430ZM431 427H432V472H431ZM432 425H433V472H432ZM433 449H435V472H433ZM435 462H436V472H435ZM436 449H439V472H436ZM439 442H441V472H439ZM441 449H447V472H441ZM447 462H448V472H447ZM448 442H449V472H448ZM449 449H450V472H449ZM450 462H451V472H450ZM451 442H452V472H451ZM452 427H453V472H452ZM453 433H454V472H453ZM454 430H455V472H454ZM455 442H457V472H455ZM457 449H458V472H457ZM458 462H459V472H458ZM459 449H463V472H459ZM463 442H464V472H463ZM464 449H470V472H464ZM470 462H471V472H470ZM471 449H473V472H471ZM473 442H474V472H473ZM474 449H478V472H474ZM478 442H479V472H478ZM479 449H480V472H479ZM480 425H482V472H480ZM482 430H483V472H482ZM483 449H486V472H483ZM486 442H487V472H486ZM487 449H489V472H487ZM489 442H490V472H489ZM490 449H492V472H490ZM492 437H493V472H492ZM493 449H496V472H493ZM496 437H497V472H496ZM497 449H498V472H497ZM498 442H499V472H498ZM499 449H503V472H499ZM503 433H505V472H503ZM505 449H509V472H505ZM509 442H510V472H509ZM510 449H511V472H510ZM511 462H512V472H511ZM512 449H518V472H512ZM518 442H519V472H518ZM519 449H522V472H519ZM522 462H523V472H522ZM523 442H524V472H523ZM524 449H532V472H524ZM532 437H533V472H532ZM533 427H534V472H533ZM534 437H535V472H534ZM535 449H538V472H535ZM538 442H539V472H538ZM539 449H542V472H539ZM542 462H543V472H542ZM543 449H552V472H543ZM552 442H553V472H552ZM553 449H557V472H553ZM557 442H558V472H557ZM558 437H559V472H558ZM559 442H560V472H559ZM560 449H565V472H560ZM565 430H566V472H565ZM566 449H568V472H566ZM568 442H569V472H568ZM569 437H571V472H569ZM571 449H572V472H571ZM572 442H574V472H572ZM574 449H578V472H574ZM578 462H579V472H578ZM579 449H583V472H579ZM583 442H584V472H583ZM584 449H585V472H584ZM585 437H586V472H585ZM586 449H591V472H586ZM591 462H592V472H591ZM592 449H594V472H592ZM594 442H595V472H594ZM595 449H603V472H595ZM603 442H604V472H603ZM604 449H610V472H604ZM610 462H611V472H610ZM611 449H617V472H611ZM617 442H618V472H617ZM618 437H619V472H618ZM619 442H620V472H619ZM620 449H628V472H620ZM628 430H630V472H628ZM630 449H636V472H630ZM636 437H637V472H636ZM637 462H638V472H637ZM638 442H642V472H638ZM642 449H646V472H642ZM646 442H648V472H646ZM648 437H649V472H648ZM649 442H650V472H649ZM650 449H651V472H650ZM651 442H654V472H651ZM654 449H657V472H654ZM657 437H658V472H657ZM658 449H663V472H658ZM663 442H664V472H663ZM664 437H665V472H664ZM665 433H666V472H665ZM666 425H667V472H666ZM667 430H668V472H667ZM668 442H670V472H668ZM670 449H677V472H670ZM677 442H678V472H677ZM678 449H683V472H678ZM683 462H684V472H683ZM684 442H686V472H684ZM686 449H687V472H686ZM687 442H688V472H687ZM688 449H690V472H688ZM690 442H692V472H690ZM692 449H696V472H692ZM696 442H697V472H696ZM697 449H706V472H697Z"/><path id="pn" fill="#002880" d="M132 462H133V472H132ZM143 462H144V472H143ZM144 449H146V472H144ZM170 462H173V472H170ZM174 462H175V472H174ZM250 462H251V472H250ZM256 462H259V472H256ZM366 462H367V472H366ZM404 462H407V472H404ZM409 462H412V472H409ZM413 462H415V472H413ZM417 462H418V472H417ZM419 462H420V472H419ZM429 462H431V472H429ZM431 449H432V472H431ZM432 462H433V472H432ZM452 462H455V472H452ZM481 462H482V472H481ZM504 462H505V472H504ZM533 462H534V472H533ZM558 462H559V472H558ZM629 462H630V472H629ZM666 462H668V472H666Z"/><defs><clipPath id="cl"><use href="#pl"/></clipPath><clipPath id="cd"><use href="#pd"/></clipPath><clipPath id="cf"><use href="#pf"/></clipPath><clipPath id="cb"><use href="#pb"/></clipPath><clipPath id="cn"><use href="#pn"/></clipPath></defs><g stroke="#5f5f5f"><g id="g0" stroke-dasharray="1 2"><path d="M550 45.5H759"/><path d="M550 49.5H759"/><path d="M550 61.5H759"/><path d="M550 74.5H759"/><path d="M550 86.5H759"/><path d="M550 90.5H759"/><path d="M550 95.5H759"/><path d="M550 102.5H759"/><path d="M550 115.5H759"/><path d="M550 127.5H759"/><path d="M550 136.5H759"/><path d="M550 143.5H759"/><path d="M550 156.5H759"/><path d="M570.5 36V166"/><path d="M591.5 36V166"/><path d="M612.5 36V166"/><path d="M633.5 36V166"/><path d="M654.5 36V166"/><path d="M675.5 36V166"/><path d="M696.5 36V166"/><path d="M717.5 36V166"/><path d="M738.5 36V166"/></g></g><g stroke="#f00" stroke-dasharray="1 2"><path d="M550 55.5H759"/><path d="M550 131.5H759"/></g><path d="M745.5 36V166" stroke="#000" stroke-dasharray="1 2"/><g stroke="#5f5f5f"><g id="g1" stroke-dasharray="1 2"><path d="M45 198.5H753"/><path d="M45 202.5H753"/><path d="M45 214.5H753"/><path d="M45 227.5H753"/><path d="M45 239.5H753"/><path d="M45 243.5H753"/><path d="M45 248.5H753"/><path d="M45 255.5H753"/><path d="M45 268.5H753"/><path d="M45 280.5H753"/><path d="M45 289.5H753"/><path d="M45 296.5H753"/><path d="M45 309.5H753"/><path d="M115.5 189V319"/><path d="M186.5 189V319"/><path d="M257.5 189V319"/><path d="M328.5 189V319"/><path d="M399.5 189V319"/><path d="M470.5 189V319"/><path d="M541.5 189V319"/><path d="M612.5 189V319"/><path d="M683.5 189V319"/></g></g><use href="#g1" stroke="#a06fa0" clip-path="url(#cl)"/><use href="#g1" stroke="#a088a0" clip-path="url(#cd)"/><use href="#g1" stroke="#a06fa0" clip-path="url(#cf)"/><g stroke="#f00" stroke-dasharray="1 2"><path d="M45 208.5H753"/><path d="M45 284.5H753"/></g><path d="M706.5 189V319" stroke="#000" stroke-dasharray="1 2"/><g stroke="#5f5f5f"><g id="g2" stroke-dasharray="1 2"><path d="M45 351.5H753"/><path d="M45 355.5H753"/><path d="M45 367.5H753"/><path d="M45 380.5H753"/><path d="M45 392.5H753"/><path d="M45 396.5H753"/><path d="M45 401.5H753"/><path d="M45 408.5H753"/><path d="M45 421.5H753"/><path d="M45 433.5H753"/><path d="M45 442.5H753"/><path d="M45 449.5H753"/><path d="M45 462.5H753"/><path d="M115.5 342V472"/><path d="M186.5 342V472"/><path d="M257.5 342V472"/><path d="M328.5 342V472"/><path d="M399.5 342V472"/><path d="M470.5 342V472"/><path d="M541.5 342V472"/><path d="M612.5 342V472"/><path d="M683.5 342V472"/></g></g><use href="#g2" stroke="#9e8860" clip-path="url(#cb)"/><use href="#g2" stroke="#a0967f" clip-path="url(#cn)"/><g stroke="#f00" stroke-dasharray="1 2"><path d="M45 361.5H753"/><path d="M45 437.5H753"/></g><path d="M706.5 342V472" stroke="#000" stroke-dasharray="1 2"/><rect x="549.5" y="34.5" width="210" height="132" fill="none" stroke="#a0a0a0"/><rect x="44.5" y="187.5" width="709" height="132" fill="none" stroke="#a0a0a0"/><rect x="44.5" y="340.5" width="709" height="132" fill="none" stroke="#a0a0a0"/></g></svg><svg width="764" height="494" viewBox="0 0 764 494" style="position:absolute;left:0;top:0" font-family='"Liberation Sans", sans-serif' fill="#000"><g font-size="11" text-anchor="end"><text x="546.4" y="50">500</text><text x="546.4" y="66">200</text><text x="546.4" y="79">100</text><text x="546.4" y="91">50</text><text x="546.4" y="107">20</text><text x="546.4" y="120">10</text><text x="546.4" y="132">5</text><text x="546.4" y="148">2</text><text x="546.4" y="161">1</text></g><g font-size="11"><text x="585.85" y="181" text-anchor="end">5</text><text x="588.55" y="181" textLength="13.3" lengthAdjust="spacingAndGlyphs">GB</text><text x="630.80" y="181" text-anchor="end">10</text><text x="633.50" y="181" textLength="13.3" lengthAdjust="spacingAndGlyphs">GB</text><text x="672.80" y="181" text-anchor="end">15</text><text x="675.50" y="181" textLength="13.3" lengthAdjust="spacingAndGlyphs">GB</text><text x="714.80" y="181" text-anchor="end">20</text><text x="717.50" y="181" textLength="13.3" lengthAdjust="spacingAndGlyphs">GB</text></g><g font-size="11" text-anchor="end"><text x="41.4" y="203">500</text><text x="41.4" y="219">200</text><text x="41.4" y="232">100</text><text x="41.4" y="244">50</text><text x="41.4" y="260">20</text><text x="41.4" y="273">10</text><text x="41.4" y="285">5</text><text x="41.4" y="301">2</text><text x="41.4" y="314">1</text></g><g font-size="11"><text x="180.85" y="334" text-anchor="end">5</text><text x="183.55" y="334" textLength="13.3" lengthAdjust="spacingAndGlyphs">GB</text><text x="325.80" y="334" text-anchor="end">10</text><text x="328.50" y="334" textLength="13.3" lengthAdjust="spacingAndGlyphs">GB</text><text x="467.80" y="334" text-anchor="end">15</text><text x="470.50" y="334" textLength="13.3" lengthAdjust="spacingAndGlyphs">GB</text><text x="609.80" y="334" text-anchor="end">20</text><text x="612.50" y="334" textLength="13.3" lengthAdjust="spacingAndGlyphs">GB</text></g><g font-size="11" text-anchor="end"><text x="41.4" y="356">500</text><text x="41.4" y="372">200</text><text x="41.4" y="385">100</text><text x="41.4" y="397">50</text><text x="41.4" y="413">20</text><text x="41.4" y="426">10</text><text x="41.4" y="438">5</text><text x="41.4" y="454">2</text><text x="41.4" y="467">1</text></g><g font-size="11"><text x="180.85" y="487" text-anchor="end">5</text><text x="183.55" y="487" textLength="13.3" lengthAdjust="spacingAndGlyphs">GB</text><text x="325.80" y="487" text-anchor="end">10</text><text x="328.50" y="487" textLength="13.3" lengthAdjust="spacingAndGlyphs">GB</text><text x="467.80" y="487" text-anchor="end">15</text><text x="470.50" y="487" textLength="13.3" lengthAdjust="spacingAndGlyphs">GB</text><text x="609.80" y="487" text-anchor="end">20</text><text x="612.50" y="487" textLength="13.3" lengthAdjust="spacingAndGlyphs">GB</text></g><g font-size="14"><text x="553.5" y="52" letter-spacing="-0.7">UNCR</text><text x="48.5" y="205" letter-spacing="-0.3">LDC</text><text x="48.5" y="358" letter-spacing="-0.7">BIS</text></g></svg>
</div>
</body></html>
